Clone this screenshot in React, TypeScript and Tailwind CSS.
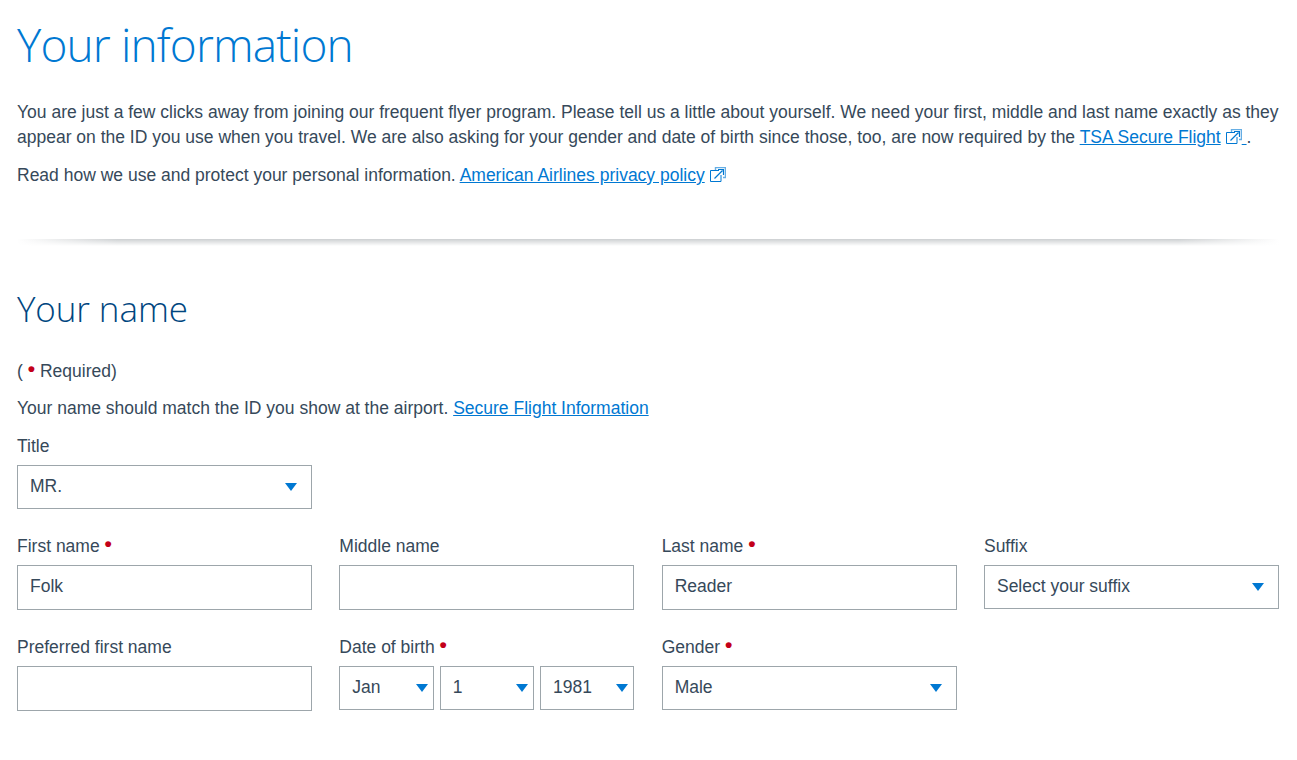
import React from "react";

const Ext = () => (
  <svg width="16" height="16" viewBox="0 0 16 16" fill="none" stroke="currentColor" strokeWidth="1" className="inline-block align-[-2px] ml-[5px] text-[#0078d2]">
    <path d="M5.5 3V0.5h10v10H13" opacity="0.6" strokeWidth="1.4" />
    <path d="M9 3.5H0.5v11h10.5V8" />
    <path d="M4.5 11.5l8-8M8 2.5h5.5V8" strokeWidth="1.2" />
  </svg>
);

const Dot = () => <span className="text-[#c30019] text-[21px] leading-[20px] relative -top-[1px] font-bold">•</span>;

const Caret = () => <span className="w-0 h-0 border-l-[6.5px] border-r-[6.5px] border-t-[8px] border-l-transparent border-r-transparent border-t-[#0078d2]" />;

const Sel = ({ v, px = "pl-3 pr-[14px]" }: { v: string; px?: string }) => (
  <div className={`flex-1 min-w-0 h-[44px] border border-[#9da6ab] ${px} flex items-center justify-between`}>
    <span className="-mt-[2px]">{v}</span>
    <Caret />
  </div>
);

const Inp = ({ v = "" }: { v?: string }) => (
  <div className="h-[45px] border border-[#9da6ab] px-3 pb-[2px] flex items-center">{v}</div>
);

const Field = ({ label, req, children }: { label: string; req?: boolean; children: React.ReactNode }) => (
  <div>
    <div className="h-[25px] mb-[6px] leading-[25px]">
      {label}
      {req && <> <Dot /></>}
    </div>
    {children}
  </div>
);

export default function App() {
  return (
    <div className="bg-white h-[760px] overflow-hidden pl-[17px] pr-[18px] text-[#36495a] text-[17.5px] leading-[25px] font-['Liberation_Sans',Arial,sans-serif]">
      <h1 className="pt-[16px] h-[88px] text-[46px] leading-[56px] tracking-[-0.85px] font-light text-[#0078d2] font-['Open_Sans',sans-serif]">Your information</h1>
      <p className="mt-[12px]">
        You are just a few clicks away from joining our frequent flyer program. Please tell us a little about yourself. We need your first, middle and last name exactly as they appear on the ID you use when you travel. We are also asking for your gender and date of birth since those, too, are now required by the{" "}
        <a className="text-[#0078d2] underline">TSA Secure Flight<Ext /> </a>.
      </p>
      <p className="mt-[13px]">
        Read how we use and protect your personal information.{" "}
        <a className="text-[#0078d2] underline">American Airlines privacy policy<Ext /></a>
      </p>
      <div className="mt-[51px] h-[7px] bg-[linear-gradient(to_bottom,transparent,#ffffff),linear-gradient(to_right,#ffffff,#cdd0d2_8%,#cdd0d2_92%,#ffffff)]" />
      <h2 className="mt-[40px] h-[46px] text-[35px] leading-[46px] tracking-[-0.1px] font-light text-[#00467f] font-['Open_Sans',sans-serif]">Your name</h2>
      <p className="mt-[27px]">( <Dot /> Required)</p>
      <p className="mt-[12px]">
        Your name should match the ID you show at the airport.{" "}
        <a className="text-[#0078d2] underline">Secure Flight Information</a>
      </p>
      <div className="mt-[13px] h-[25px]">Title</div>
      <div className="mt-[6px] w-[295px] flex"><Sel v="MR." /></div>
      <div className="mt-[25px] grid grid-cols-4 gap-x-[27.3px] gap-y-[25px]">
        <Field label="First name" req><Inp v="Folk" /></Field>
        <Field label="Middle name"><Inp /></Field>
        <Field label="Last name" req><Inp v="Reader" /></Field>
        <Field label="Suffix"><div className="flex"><Sel v="Select your suffix" /></div></Field>
        <Field label="Preferred first name"><Inp /></Field>
        <Field label="Date of birth" req>
          <div className="flex gap-[6px]">
            <Sel v="Jan" px="pl-3 pr-[5px]" />
            <Sel v="1" px="pl-3 pr-[5px]" />
            <Sel v="1981" px="pl-3 pr-[5px]" />
          </div>
        </Field>
        <Field label="Gender" req><div className="flex"><Sel v="Male" /></div></Field>
      </div>
    </div>
  );
}
